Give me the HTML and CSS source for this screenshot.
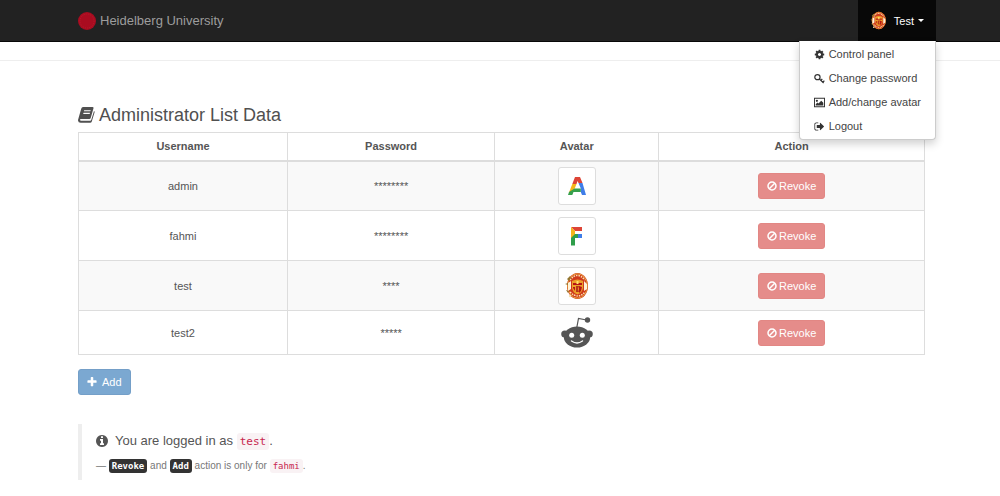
FILE: index.html
```html
<!DOCTYPE html>
<html lang="en">
<head>
<meta charset="utf-8">
<title>Heidelberg University</title>
<link rel="stylesheet" href="styles.css">
</head>
<body>
<svg class="defs" aria-hidden="true">
  <symbol id="ban" viewBox="0 0 16 16"><g fill="none" stroke="currentColor" stroke-width="2.400"><circle cx="8" cy="8" r="6.400"/><path d="M3.600 12.400 12.400 3.600"/></g></symbol>
  <symbol id="crest" viewBox="0 0 24 28">
    <ellipse cx="12.500" cy="14" rx="10.500" ry="13" fill="#cf3a1c"/>
    <ellipse cx="12.500" cy="14" rx="9.800" ry="12.200" fill="none" stroke="#e9a23c" stroke-width="1"/>
    <path d="M5 8Q12-1 20 8M5 20q8 8 15 0" fill="none" stroke="#fbe3b0" stroke-width="1.500" stroke-dasharray="1.500 1"/>
    <path d="M3 11l3-2v8l-3 2zM19 9l3 3v5l-3 2z" fill="#fff3d6"/>
    <path d="M7 9q5.500-3 11 0v7q-1 5-5.500 6.500Q8 21 7 16z" fill="#eda02a"/>
    <path d="M8 11h9v2H8zM8 15h2v4l-2-3zM14 14l3 1-1 4-2 2z" fill="#b51515"/>
    <path d="M11 14h3l-1 3 1 3h-3z" fill="#b8331a"/><path d="M11.500 9h2v3h-2z" fill="#ffe36b"/>
    <path d="M2 7l3-3 1 2-2 3zM0 12l3-1v2zM1 18l3 1-1 2z" fill="#94762f"/><circle cx="5" cy="24" r="1.200" fill="#f4e2b5"/>
  </symbol>
</svg>
<header class="navbar">
  <div class="container navbar-inner">
    <a class="brand" href="#"><svg class="seal" viewBox="0 0 18 18" aria-hidden="true"><circle cx="9" cy="9" r="9" fill="#a90c20"/><circle cx="9" cy="9" r="7" fill="none" stroke="#b91a2c" stroke-width="1" stroke-dasharray="1 1"/></svg>Heidelberg University</a>
    <div class="user">
      <button class="user-toggle" type="button" aria-expanded="true"><svg class="user-avatar" aria-hidden="true"><use href="#crest"/></svg>Test<span class="caret"></span></button>
      <ul class="menu">
        <li><a href="#"><svg viewBox="0 0 1536 1792"><path d="M1024 896q0-106-75-181t-181-75-181 75-75 181 75 181 181 75 181-75 75-181zm512-109v222q0 12-8 23t-20 13l-185 28q-19 54-39 91 35 50 107 138 10 12 10 25t-9 23q-27 37-99 108t-94 71q-12 0-26-9l-138-108q-44 23-91 38-16 136-29 186-7 28-36 28h-222q-14 0-24.500-8.500t-11.500-21.500l-28-184q-49-16-90-37l-141 107q-10 9-25 9-14 0-25-11-126-114-165-168-7-10-7-23 0-12 8-23 15-21 51-66.500t54-70.500q-27-50-41-99l-183-27q-13-2-21-12.500t-8-23.500v-222q0-12 8-23t19-13l186-28q14-46 39-92-40-57-107-138-10-12-10-24 0-10 9-23 26-36 98.500-107.500t94.500-71.500q13 0 26 10l138 107q44-23 91-38 16-136 29-186 7-28 36-28h222q14 0 24.500 8.500t11.500 21.500l28 184q49 16 90 37l142-107q9-9 24-9 13 0 25 10 129 119 165 170 7 8 7 22 0 12-8 23-15 21-51 66.500t-54 70.500q26 50 41 98l183 28q13 2 21 12.500t8 23.500z"/></svg>Control panel</a></li>
        <li><a href="#"><svg viewBox="0 0 16 16"><g fill="none" stroke="currentColor" stroke-width="1.800"><circle cx="5" cy="6" r="3.800"/><path d="M7.500 8.500 14 14.500M10 11l2-2.500M13 13.500l2-2.500"/></g></svg>Change password</a></li>
        <li><a href="#"><svg viewBox="0 0 16 16"><path d="M0 1h16v14H0zM1.400 2.400v11.200h13.200V2.400z" fill-rule="evenodd"/><circle cx="4.200" cy="5.600" r="1.600"/><path d="M2.500 12.500V10.500L5 8l1.500 1.500L10.500 5.500l3 3v4z"/></svg>Add/change avatar</a></li>
        <li><a href="#"><svg viewBox="0 0 1792 1792"><path d="M704 1440q0 4 1 20t.5 26.500-3 23.500-10 19.500-20.500 6.500h-320q-119 0-203.500-84.500t-84.500-203.500v-704q0-119 84.500-203.500t203.500-84.500h320q13 0 22.500 9.500t9.500 22.500q0 4 1 20t.5 26.500-3 23.500-10 19.500-20.500 6.500h-320q-66 0-113 47t-47 113v704q0 66 47 113t113 47h312l11.500 1 11.500 3 8 5.500 7 9 2 13.500zm928-544q0 26-19 45l-544 544q-19 19-45 19t-45-19-19-45v-288h-448q-26 0-45-19t-19-45v-384q0-26 19-45t45-19h448v-288q0-26 19-45t45-19 45 19l544 544q19 19 19 45z"/></svg>Logout</a></li>
      </ul>
    </div>
  </div>
</header>
<hr class="rule">
<main class="container">
  <h1 class="title"><svg viewBox="0 0 17 16" aria-hidden="true"><path d="M5 0h9.500q1.300 0 1 1.200L12.700 11q-.3 1-1.300 1H3q-1.300 0-1 1 .2.700 1 .7h9.200q.7 0 1-.7L16 4q.8.400.600 1.200l-2.800 9.300q-.4 1.300-1.700 1.300H2.700Q.2 15.800 0 13.400q0-.8.300-1.500L3.200 1.700Q3.700.1 5 0zM6.200 3.200 5.900 4.300h6.500l.3-1.100zM5.500 5.800l-.3 1.100h6.500l.3-1.100z" fill-rule="evenodd"/></svg>Administrator List Data</h1>
  <table class="admins">
    <thead><tr><th class="c-user">Username</th><th class="c-pass">Password</th><th class="c-avatar">Avatar</th><th class="c-action">Action</th></tr></thead>
    <tbody>
      <tr><td>admin</td><td>********</td><td><span class="thumb"><svg viewBox="0 0 28 28" role="img" aria-label="admin avatar"><path d="M12 5h5l2.500 6h-4L14.500 9l-1 3H9.300z" fill="#dd4436"/><path d="M15.500 11h4L23 23h-4l-1.200-3V16.500z" fill="#3f7de8"/><path d="M9.300 12h4.200L11.500 17 9 20.500H6z" fill="#f4b51b"/><path d="M11.500 16.500h6.300V20H10.500l-1.200 3H5l1-3z" fill="#37a04c"/></svg></span></td><td><button class="btn btn-danger" type="button"><svg><use href="#ban"/></svg>Revoke</button></td></tr>
      <tr><td>fahmi</td><td>********</td><td><span class="thumb"><svg viewBox="0 0 28 28" role="img" aria-label="fahmi avatar"><path d="M8 5h11v4h-7z" fill="#dd4436"/><path d="M8 5l4 4v4l-4 4z" fill="#f4b51b"/><path d="M14 12h5v4h-5z" fill="#3f7de8"/><path d="M8 16l4-4h3v4h-3v7.500H8z" fill="#2f9e4a"/></svg></span></td><td><button class="btn btn-danger" type="button"><svg><use href="#ban"/></svg>Revoke</button></td></tr>
      <tr><td>test</td><td>****</td><td><span class="thumb"><svg role="img" aria-label="test avatar"><use href="#crest"/></svg></span></td><td><button class="btn btn-danger" type="button"><svg><use href="#ban"/></svg>Revoke</button></td></tr>
      <tr class="compact"><td>test2</td><td>*****</td><td><svg class="alien" viewBox="0 0 32 32" role="img" aria-label="test2 avatar"><g fill="#555"><ellipse cx="16" cy="20" rx="13.200" ry="10.500"/><circle cx="3.800" cy="17" r="3.600"/><circle cx="28.200" cy="17" r="3.600"/><circle cx="26.500" cy="3" r="2.700"/></g><path d="M15.700 11 17.500 1.500l8 1.500" fill="none" stroke="#555" stroke-width="1.200"/><circle cx="10.700" cy="18.300" r="2.500" fill="#fff"/><circle cx="21.300" cy="18.300" r="2.500" fill="#fff"/><path d="M10.500 24q5.500 4 11 0" fill="none" stroke="#fff" stroke-width="1.400" stroke-linecap="round"/></svg></td><td><button class="btn btn-danger" type="button"><svg><use href="#ban"/></svg>Revoke</button></td></tr>
    </tbody>
  </table>
  <button class="btn btn-primary" type="button"><svg viewBox="128 128 1536 1536"><path d="M1600 736v192q0 40-28 68t-68 28h-416v416q0 40-28 68t-68 28h-192q-40 0-68-28t-28-68v-416h-416q-40 0-68-28t-28-68v-192q0-40 28-68t68-28h416v-416q0-40 28-68t68-28h192q40 0 68 28t28 68v416h416q40 0 68 28t28 68z"/></svg>Add</button>
  <blockquote class="note">
    <p><svg viewBox="128 128 1536 1536" aria-hidden="true"><path d="M1152 1376v-160q0-14-9-23t-23-9h-96v-512q0-14-9-23t-23-9h-320q-14 0-23 9t-9 23v160q0 14 9 23t23 9h96v320h-96q-14 0-23 9t-9 23v160q0 14 9 23t23 9h448q14 0 23-9t9-23zm-128-896v-160q0-14-9-23t-23-9h-192q-14 0-23 9t-9 23v160q0 14 9 23t23 9h192q14 0 23-9t9-23zm640 416q0 209-103 385.500t-279.500 279.500-385.500 103-385.500-103-279.500-279.500-103-385.500 103-385.500 279.500-279.500 385.500-103 385.500 103 279.500 279.500 103 385.500z"/></svg><span>You are logged in as <code>test</code>.</span></p>
    <footer>— <kbd>Revoke</kbd> and <kbd>Add</kbd> action is only for <code>fahmi</code>.</footer>
  </blockquote>
</main>
</body>
</html>
```
FILE: styles.css
```css
* { box-sizing: border-box; }
body {
  margin: 0;
  background: #fff;
  color: #555;
  font: 11px/16px "Liberation Sans", Arial, sans-serif;
}
svg { fill: currentColor; flex: none; }
.defs { position: absolute; width: 0; height: 0; }
.container { padding: 0 75px 0 78px; }

.navbar { background: #222; border-bottom: 1px solid #080808; }
.navbar-inner { display: flex; justify-content: space-between; padding-right: 64px; }
.brand {
  display: flex;
  align-items: center;
  gap: 4px;
  color: #9d9d9d;
  font-size: 13px;
  text-decoration: none;
}
.seal { width: 18px; height: 18px; }
.user { position: relative; }
.user-toggle {
  display: flex;
  align-items: center;
  height: 41px;
  padding: 0 12px;
  border: 0;
  background: #080808;
  color: #fff;
  font: inherit;
}
.user-avatar { width: 17px; height: 19px; margin-right: 7px; }
.caret {
  margin-left: 4px;
  border: 3px solid transparent;
  border-top-color: #fff;
  border-bottom: 0;
}
.menu {
  position: absolute;
  z-index: 1;
  top: 100%;
  right: 0;
  margin: 0;
  padding: 1px 0;
  list-style: none;
  background: #fff;
  border: 1px solid #ccc;
  border-top: 0;
  border-radius: 0 0 4px 4px;
  box-shadow: 0 4px 9px rgba(0, 0, 0, .18);
}
.menu a {
  display: flex;
  align-items: center;
  gap: 4px;
  padding: 4px 14px;
  color: #444;
  text-decoration: none;
  white-space: nowrap;
}
.menu svg { width: 11px; height: 11px; color: #333; }

.rule { margin: 18px 0 0; border: 0; border-top: 1px solid #eee; }
.title {
  display: flex;
  align-items: center;
  gap: 4px;
  margin: 44px 0 7px;
  color: #505050;
  font-size: 18px;
  font-weight: 400;
  line-height: 20px;
}
.title svg { width: 17px; height: 16px; }

.admins {
  width: 100%;
  table-layout: fixed;
  border-collapse: collapse;
  text-align: center;
}
.admins th, .admins td { padding: 0; border: 1px solid #ddd; vertical-align: middle; }
.admins th { height: 28px; border-bottom-width: 2px; }
.admins td { height: 50px; }
.admins .compact td { height: 44px; }
.admins tbody tr:nth-child(odd) { background: #f9f9f9; }
.c-user { width: 24.7%; }
.c-pass { width: 24.5%; }
.c-avatar { width: 19.4%; }
.c-action { width: 31.4%; }
.thumb {
  display: inline-flex;
  padding: 4px;
  background: #fff;
  border: 1px solid #ddd;
  border-radius: 3px;
  vertical-align: middle;
}
.thumb svg { width: 28px; height: 28px; }
.alien { display: block; width: 32px; height: 32px; margin: 0 auto; }

.btn {
  display: inline-flex;
  align-items: center;
  gap: 2px;
  padding: 4px 8px;
  border: 1px solid;
  border-radius: 3px;
  color: #fff;
  font: inherit;
  vertical-align: middle;
}
.btn svg { width: 10px; height: 10px; }
.btn-danger { background: #e58c8a; border-color: #e28784; }
.btn-primary { gap: 5px; margin-top: 14px; background: #7ba8d1; border-color: #749fc8; }

.note {
  margin: 29px 0 0;
  padding: 7px 14px 6px;
  border-left: 4px solid #eee;
}
.note p {
  display: flex;
  align-items: center;
  gap: 7px;
  margin: 0 0 7px;
  color: #555;
  font-size: 13px;
  line-height: 20px;
}
.note svg { width: 12px; height: 12px; }
.note footer { color: #777; font-size: 10px; line-height: 16px; }
code, kbd {
  padding: 2px 3px;
  border-radius: 3px;
  font-family: "DejaVu Sans Mono", monospace;
  font-size: 9px;
}
code { background: #f9f2f4; color: #c7254e; }
.note p code { font-size: 11px; line-height: 12px; }
kbd { background: #333; color: #fff; font-weight: 700; }
```
